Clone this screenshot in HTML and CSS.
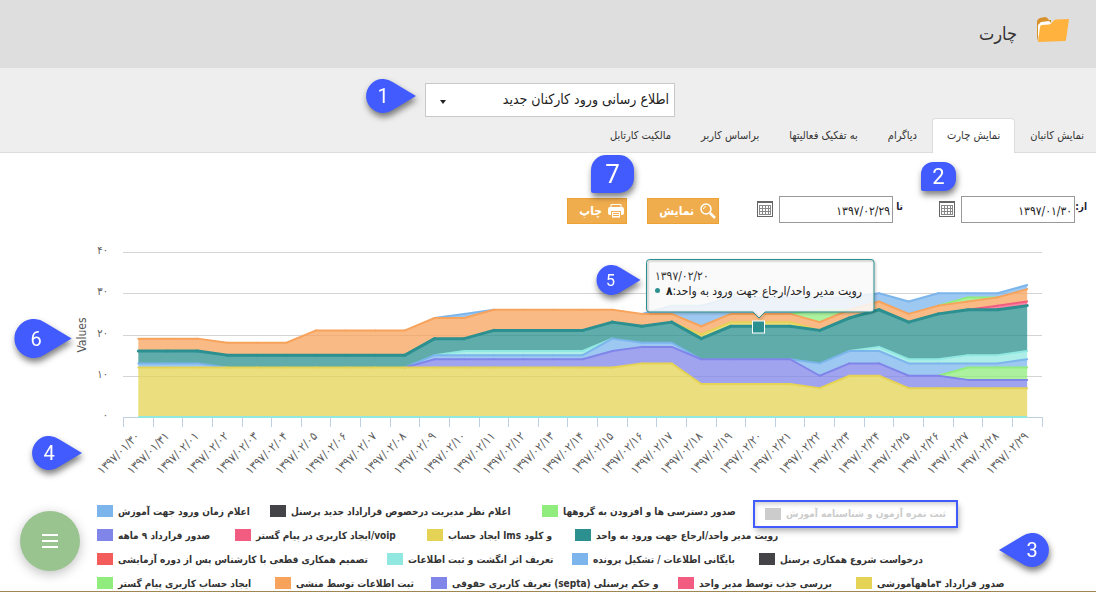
FILE: index.html
```html
<!DOCTYPE html>
<html lang="fa" dir="rtl">
<head>
<meta charset="utf-8">
<title>چارت</title>
<link rel="stylesheet" href="styles.css">
</head>
<body>
<svg class="defs" aria-hidden="true">
  <symbol id="drop" viewBox="0 0 50 34"><path d="M50 17 L27 3.2 A17 17 0 1 0 27 30.800 Z"/></symbol>
  <symbol id="calendar" viewBox="0 0 16 16">
    <path fill="#666" d="M0 0h16v16H0z"/><path fill="#fff" d="M1 2h14v13H1z"/>
    <path stroke="#888" fill="none" d="M2.500 4v10M5.500 4v10M8.500 4v10M11.500 4v10M13.500 4v10M2 4.500h12M2 7.500h12M2 10.500h12M2 13.500h12"/>
  </symbol>
</svg>

<header class="header">
  <svg class="folder" viewBox="0 0 32 26" aria-hidden="true">
    <path fill="#d8922b" d="M0 24V5q0-3 3-4l5-1q2 0 4 3h2v4H5z"/>
    <path fill="#fff" d="M1 22V8l3-3 8-1 3 3-3 2-8 1z"/>
    <path fill="#ffb23e" d="M1 25 3 10q.5-2 2-2l7-.5q1 0 2-1l3-3q1-1 2-1l13-.5-3 21q0 1-1 1z"/>
  </svg>
  <h1 class="title">چارت</h1>
</header>

<section class="subheader">
  <div class="picker-row">
    <div class="picker">
      <select class="picker-select" aria-label="فرآیند"><option>اطلاع رسانی ورود کارکنان جدید</option></select>
    </div>
  </div>
  <nav class="tabs">
    <a class="tab" href="#">نمایش کانبان</a>
    <a class="tab tab-active" href="#">نمایش چارت</a>
    <a class="tab" href="#">دیاگرام</a>
    <a class="tab" href="#">به تفکیک فعالیتها</a>
    <a class="tab" href="#">براساس کاربر</a>
    <a class="tab" href="#">مالکیت کارتابل</a>
  </nav>
</section>

<form class="filters">
  <div class="field">
    <label class="field-label" for="from">از:</label>
    <input class="date" id="from" type="text" value="۱۳۹۷/۰۱/۳۰">
    <svg class="calendar" aria-hidden="true"><use href="#calendar"/></svg>
  </div>
  <div class="field">
    <label class="field-label" for="to">تا</label>
    <input class="date" id="to" type="text" value="۱۳۹۷/۰۲/۲۹">
    <svg class="calendar" aria-hidden="true"><use href="#calendar"/></svg>
  </div>
  <div class="actions">
    <button class="action action-show" type="button">
      <svg class="action-icon" viewBox="0 0 16 16" aria-hidden="true"><circle cx="6" cy="6" r="5" fill="none" stroke="#fff" stroke-width="1.500"/><path d="m10 10 5 5" stroke="#fff" stroke-width="2.500"/><path d="M3.500 6Q4 3.500 6 3.500" fill="none" stroke="#fff"/></svg>
      نمایش
    </button>
    <button class="action action-print" type="button">
      <svg class="action-icon" viewBox="0 0 16 16" aria-hidden="true"><path d="M3 4V1.500h10V4" fill="none" stroke="#fff"/><rect y="4" width="16" height="8" rx="2" fill="#fff"/><path d="M3.500 8.500h9v6.500h-9z" fill="#fff" stroke="#f0ad4e"/><path d="M5 10.500h6M5 12.500h6" stroke="#f0ad4e"/></svg>
      چاپ
    </button>
  </div>
</form>

<main class="report">
  <svg class="chart" id="chart" viewBox="0 232 1096 265" role="img" aria-label="Values"></svg>
  <div class="legend" id="legend"></div>
</main>

<button class="menu" aria-label="منو" type="button"><span class="menu-bar"></span><span class="menu-bar"></span><span class="menu-bar"></span></button>
<div class="bottom-line"></div>

<div class="mark drop mark-1"><svg class="drop-shape"><use href="#drop"/></svg><span class="num">1</span></div>
<div class="mark square mark-2"><span class="num">2</span></div>
<div class="mark drop flip mark-3"><svg class="drop-shape"><use href="#drop"/></svg><span class="num">3</span></div>
<div class="mark drop mark-4"><svg class="drop-shape"><use href="#drop"/></svg><span class="num">4</span></div>
<div class="mark drop mark-5"><svg class="drop-shape"><use href="#drop"/></svg><span class="num">5</span></div>
<div class="mark drop mark-6"><svg class="drop-shape"><use href="#drop"/></svg><span class="num">6</span></div>
<div class="mark square mark-7"><span class="num">7</span></div>
<script src="chart.js"></script>
</body>
</html>
```
FILE: styles.css
```css
* { box-sizing: border-box; }
body {
  margin: 0;
  height: 100vh;
  position: relative;
  overflow: hidden;
  background: #fff;
  color: #333;
  font-family: "DejaVu Sans Condensed", "DejaVu Sans", sans-serif;
}
.defs { position: absolute; width: 0; height: 0; }

.header {
  display: flex;
  align-items: center;
  gap: 20px;
  height: 68px;
  padding: 0 27px 8px;
  background: #dedede;
}
.folder { width: 32px; height: 26px; }
.title { margin: 0; padding-top: 6px; font-size: 18px; font-weight: 400; }

.subheader { background: #eee; border-bottom: 1px solid #ddd; padding-top: 15px; }
.picker-row { display: flex; justify-content: center; padding-left: 4px; }
.picker { position: relative; width: 250px; }
.picker::after {
  content: "";
  position: absolute;
  left: 15px;
  top: 17px;
  border: 3px solid transparent;
  border-top: 4px solid #222;
  border-bottom: 0;
}
.picker-select {
  appearance: none;
  display: block;
  width: 100%;
  height: 34px;
  padding: 0 5px 2px;
  border: 1px solid #c8c8c8;
  border-radius: 0;
  background: #fff;
  color: #222;
  font: 14px "DejaVu Sans Condensed", "DejaVu Sans", sans-serif;
}
.tabs { display: flex; margin-bottom: -1px; padding-top: 1px; }
.tab {
  height: 35px;
  padding: 0 14px;
  border: 1px solid transparent;
  border-bottom: 0;
  color: #333;
  font-size: 11px;
  line-height: 33px;
  text-decoration: none;
  white-space: nowrap;
}
.tab:first-child { padding-right: 11px; }
.tab-active { background: #fff; border-color: #ddd; border-radius: 4px 4px 0 0; }

.filters { display: flex; align-items: center; padding: 41px 9px 0; gap: 36px; }
.field { display: flex; align-items: center; gap: 6px; }
.field-label { width: 8px; margin-left: -4px; padding-bottom: 6px; font-size: 10px; font-weight: 700; white-space: nowrap; color: #223; }
.field:first-child .field-label { width: 10px; }
.date {
  width: 114px;
  height: 27px;
  padding: 4px 2px 0;
  border: 1px solid #999;
  color: #222;
  font: 12px "DejaVu Sans Condensed", "DejaVu Sans", sans-serif;
}
.calendar { width: 16px; height: 16px; }
.actions { display: flex; gap: 20px; padding: 4px 2px 0 0; }
.action {
  display: flex;
  align-items: center;
  justify-content: flex-start;
  gap: 6px;
  height: 26px;
  padding: 0 2px;
  border: 1px solid #eea236;
  background: #f0ad4e;
  color: #fff;
  font: 700 12px "DejaVu Sans Condensed", "DejaVu Sans", sans-serif;
}
.action-show { width: 72px; }
.action-print { width: 60px; }
.action-icon { width: 16px; height: 16px; }

.report { display: flex; flex-direction: column; margin-top: 8px; }
.chart { display: block; width: 100%; height: auto; direction: ltr; }
.chart text { fill: #606060; font-size: 12px; }
.chart .axis-value { font-size: 11px; }
.chart .axis-title { font-size: 12px; fill: #555; }
.chart .tip-date { fill: #333; }
.chart .tip-text { fill: #222; }
.chart .tip-value { font-weight: 700; }
.tip-edge { filter: drop-shadow(1px 1px 1px rgba(0, 0, 0, .4)); }

.legend { direction: ltr; padding: 2px 90px 0 97px; }
.legend-row { display: grid; grid-template-rows: 24px; align-items: center; }
.legend-item {
  display: flex;
  align-items: center;
  justify-self: start;
  gap: 5px;
  padding: 0;
  border: 0;
  background: none;
  color: #333;
  font: 700 10px "DejaVu Sans Condensed", "DejaVu Sans", sans-serif;
  white-space: nowrap;
}
.swatch { flex: none; width: 16px; height: 12px; }
.legend-item.off {
  height: 26px;
  margin: 5px 0 0 -11px;
  padding-left: 11px;
  width: 203px;
  color: #ccc;
  outline: 2px solid #415bff;
  outline-offset: -1px;
  box-shadow: 2px 4px 6px rgba(0, 0, 0, .3), inset 1px 3px 5px rgba(0, 0, 0, .2);
}

.menu {
  position: fixed;
  left: 20px;
  bottom: 21px;
  display: flex;
  flex-direction: column;
  align-items: center;
  justify-content: center;
  gap: 4px;
  width: 60px;
  height: 60px;
  border: 0;
  border-radius: 50%;
  background: #99c48f;
  box-shadow: 0 3px 12px rgba(0, 0, 0, .25);
}
.menu-bar { width: 16px; height: 2px; background: #fff; }
.bottom-line { position: fixed; left: 0; right: 0; bottom: 0; height: 1px; background: #a08652; }

.mark {
  position: absolute;
  display: flex;
  align-items: center;
  justify-content: center;
  color: #fff;
  font: 20px Roboto, "Liberation Sans", sans-serif;
  direction: ltr;
  filter: drop-shadow(1px 4px 3px rgba(0, 0, 0, .5));
}
.drop { width: 50px; height: 34px; padding-right: 16px; }
.drop-shape { position: absolute; inset: 0; width: 100%; height: 100%; fill: #415bff; }
.flip { padding: 0 0 0 16px; }
.flip .drop-shape { transform: scaleX(-1); }
.num { position: relative; }
.square { background: #415bff; border-radius: 12px 12px 12px 2px; }
.mark-1 { left: 366px; top: 79px; }
.mark-2 { left: 921px; top: 162px; width: 35px; height: 29px; font-size: 22px; }
.mark-3 { left: 999px; top: 533px; }
.mark-4 { left: 32px; top: 436px; }
.mark-5 { left: 595px; top: 265px; width: 47px; height: 30px; font-size: 16px; }
.mark-6 { left: 14px; top: 319px; width: 58px; height: 39px; padding-right: 14px; }
.mark-7 { left: 591px; top: 155px; width: 43px; height: 38px; font-size: 26px; border-radius: 15px 15px 15px 2px; }
```
FILE: chart.js
```js
const digits = s => String(s).replace(/\d/g, d => '۰۱۲۳۴۵۶۷۸۹'[d]);
const rep = (v, n) => Array(n).fill(v);
const step = 918.5 / 31;
const px = i => 123.5 + step * (i + 0.5);
const py = v => 417 - v * 4.125;

// Running totals of the stacked series, lowest first.
const yellow = [...rep(12, 17), 13, 13, 8, 8, 8, 8, 7, 10, 10, 7, 7, 7, 7, 7];
const violet = [...rep(12, 10), ...rep(14, 6), 16, 17, 17, 14, 14, 14, 14, 10, 13, 13, 10, 10, 9, 9, 9];
const green = [...violet.slice(0, 28), 12, 12, 12];
const blue = [13, 13, 13, ...rep(12, 7), ...rep(15, 6), 19, 18, 18, 14, 14, 14, 14, 13, 16, 16, 13, 13, 13, 13, 14];
const aqua = [...blue.slice(0, 11), ...rep(16, 5), ...blue.slice(16, 25), 17, 14, 14, 15, 15, 16];
const teal = [16, 16, 16, ...rep(15, 7), 19, 19, ...rep(21, 4), 23, 22, 23, 19, 22, 22, 22, 21, 24, 26, 23, 25, 26, 26, 27];
const pink = [...teal.slice(0, 29), 27, 28];
const gold = [...teal.slice(0, 19), 20, 23, 23, 23, ...pink.slice(23)];
const orange = [19, 19, 19, 18, 18, 18, ...rep(21, 4), 24, 24, ...rep(26, 5), 25, 25, 22, 25, 25, 25, 23, 26, 28, 25, 27, 28, 29, 31];
const lime = [...orange.slice(0, 23), 26, 26, ...orange.slice(25, 28), 29, 29, 31];
const sky = [...orange.slice(0, 11), 25, ...rep(26, 5), 25, 27, 27, 29, 29, 29, 29, 29, 30, 28, 30, 30, 30, 32];
const zero = rep(0, 31);

const layers = [
  [yellow, '#e4d354'], [violet, '#8085e9'], [green, '#90ed7d'], [blue, '#7cb5ec'],
  [aqua, '#91e8e1'], [teal, '#2b908f'], [pink, '#f15c80'], [gold, '#e4d354'],
  [orange, '#f7a35c'], [lime, '#90ed7d'], [sky, '#7cb5ec']
];
const points = a => a.map((v, i) => px(i) + ' ' + py(v));

let out = '';
[0, 10, 20, 30, 40].forEach(v => {
  const y = Math.round(py(v)) + 0.5;
  out += `<path d="M123 ${y}H1042" stroke="${v ? '#d4d4d4' : '#c0d0e0'}"/>`;
  out += `<text class="axis-value" x="108" y="${y + 1}" text-anchor="end">${digits(v)}</text>`;
});
for (let k = layers.length - 1; k >= 0; k--) {
  const [top, color] = layers[k];
  const base = k ? layers[k - 1][0] : zero;
  const width = top === teal ? 3 : 2;
  out += `<path d="M${points(top).join('L')}L${points(base).reverse().join('L')}Z" fill="${color}" fill-opacity=".75"/>`;
  // The line is drawn only where the band has some height.
  for (let i = 0; i < 30; i++) {
    if (top[i] > base[i] || top[i + 1] > base[i + 1]) {
      out += `<path d="M${px(i)} ${py(top[i])}L${px(i + 1)} ${py(top[i + 1])}" stroke="${color}" stroke-width="${width}" stroke-linecap="round"/>`;
    }
  }
}
out += `<path d="M${px(0)} 417H${px(30)}" stroke="#91e8e1" stroke-width="2"/>`;
for (let i = 0; i <= 31; i++) {
  out += `<path d="M${Math.round(123 + step * i) + 0.5} 417v10" stroke="#c0d0e0"/>`;
}
for (let i = 0; i < 31; i++) {
  const day = i < 2 ? '01/' + (30 + i) : '02/' + String(i - 1).padStart(2, '0');
  out += `<text text-anchor="end" transform="translate(${px(i) + 2} 437) rotate(-45)">${digits('1397/' + day)}</text>`;
}
out += '<text class="axis-title" text-anchor="middle" transform="translate(86 335) rotate(-90)">Values</text>';
const tip = 'M649.500 259.500H871q3 0 3 3V309q0 3-3 3H765l-6 6-6-6H649.500q-3 0-3-3V262.500q0-3 3-3z';
out += `<path d="${tip}" fill="#f9f9f9" fill-opacity=".87"/>
<path class="tip-edge" d="${tip}" fill="none" stroke="#2b908f"/>
<rect x="752.500" y="321" width="12" height="12" fill="#2b908f" stroke="#fff"/>
<text class="tip-date" x="655" y="280">${digits('1397/02/20')}</text>
<circle cx="657.500" cy="290.500" r="2.500" fill="#2b908f"/>
<text class="tip-text" x="862" y="295" direction="rtl">رویت مدیر واحد/ارجاع جهت ورود به واحد:<tspan class="tip-value">۸</tspan></text>`;
document.getElementById('chart').innerHTML = out;

const rows = [
  ['173fr 272fr 223fr 241fr', [
    ['#7cb5ec', 'اعلام زمان ورود جهت آموزش'],
    ['#434348', 'اعلام نظر مدیریت درخصوص قراراداد جدید پرسنل'],
    ['#90ed7d', 'صدور دسترسی ها و افزودن به گروهها'],
    ['#ccc', 'ثبت نمره آزمون و شناسنامه آموزش', 'off']]],
  ['138fr 192fr 148fr 431fr', [
    ['#8085e9', 'صدور قرارداد ۹ ماهه'],
    ['#f15c80', 'voip/ایجاد کاربری در پیام گستر'],
    ['#e4d354', 'و کلود lms ایجاد حساب'],
    ['#2b908f', 'رویت مدیر واحد/ارجاع جهت ورود به واحد']]],
  ['290fr 185fr 187fr 247fr', [
    ['#f45b5b', 'تصمیم همکاری قطعی با کارشناس پس از دوره آزمایشی'],
    ['#91e8e1', 'تعریف اثر انگشت و ثبت اطلاعات'],
    ['#7cb5ec', 'بایگانی اطلاعات / تشکیل پرونده'],
    ['#434348', 'درخواست شروع همکاری پرسنل']]],
  ['178fr 156fr 247fr 178fr 150fr', [
    ['#90ed7d', 'ایجاد حساب کاربری پیام گستر'],
    ['#f7a35c', 'ثبت اطلاعات توسط منشی'],
    ['#8085e9', 'و حکم پرسنلی (septa) تعریف کاربری حقوقی'],
    ['#f15c80', 'بررسی جذب توسط مدیر واحد'],
    ['#e4d354', 'صدور قرارداد ۳ماههآموزشی']]]
];
document.getElementById('legend').innerHTML = rows.map(([cols, items]) =>
  `<div class="legend-row" style="grid-template-columns:${cols}">` + items.map(([color, name, off = '']) =>
    `<button type="button" class="legend-item ${off}"><span class="swatch" style="background:${color}"></span><span dir="rtl">${name}</span></button>`
  ).join('') + '</div>').join('');
```
